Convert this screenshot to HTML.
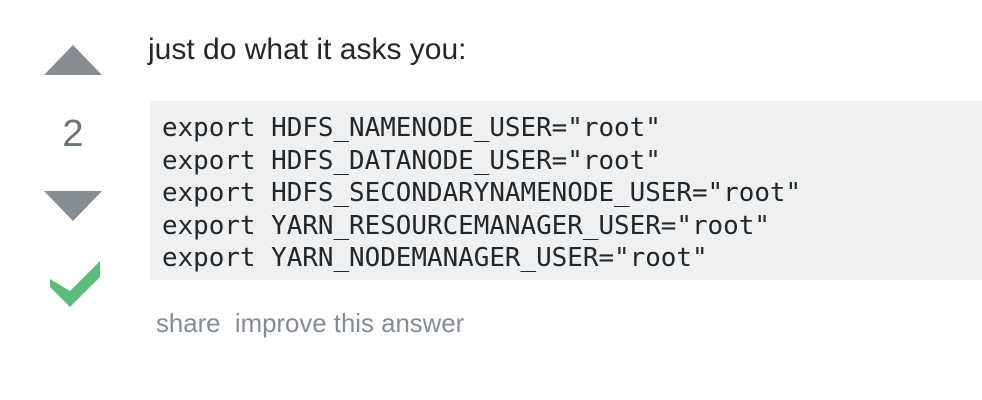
<!DOCTYPE html><html><head><style>
body{margin:0;background:#fff;width:982px;height:400px;position:relative;overflow:hidden}
.t{position:absolute;left:148px;top:33px;font:30px "Liberation Sans",sans-serif;color:#242729}
.n{position:absolute;left:44px;width:58px;text-align:center;top:113px;font:38px "Liberation Sans",sans-serif;color:#6a737c}
pre{position:absolute;left:150px;top:101px;width:832px;height:179px;margin:0;background:#eff0f1;box-sizing:border-box;padding:11px 12px;font:25.9px/32.5px "DejaVu Sans Mono",monospace;color:#242729}
.l{position:absolute;left:156px;top:310px;font:25.8px "Liberation Sans",sans-serif;color:#848d95}
</style></head><body>
<svg width="982" height="400" style="position:absolute;left:0;top:0">
<polygon points="44,75 102,75 73,45" fill="#858c93"/>
<polygon points="44,191 102,191 73,221" fill="#858c93"/>
<polygon points="50,279 50,287 70,307 100,277 100,261 70,291" fill="#5eba7d"/>
</svg>
<div class="t">just do what it asks you:</div>
<div class="n">2</div>
<pre>export HDFS_NAMENODE_USER="root"
export HDFS_DATANODE_USER="root"
export HDFS_SECONDARYNAMENODE_USER="root"
export YARN_RESOURCEMANAGER_USER="root"
export YARN_NODEMANAGER_USER="root"</pre>
<div class="l">share&nbsp; improve this answer</div>
</body></html>
